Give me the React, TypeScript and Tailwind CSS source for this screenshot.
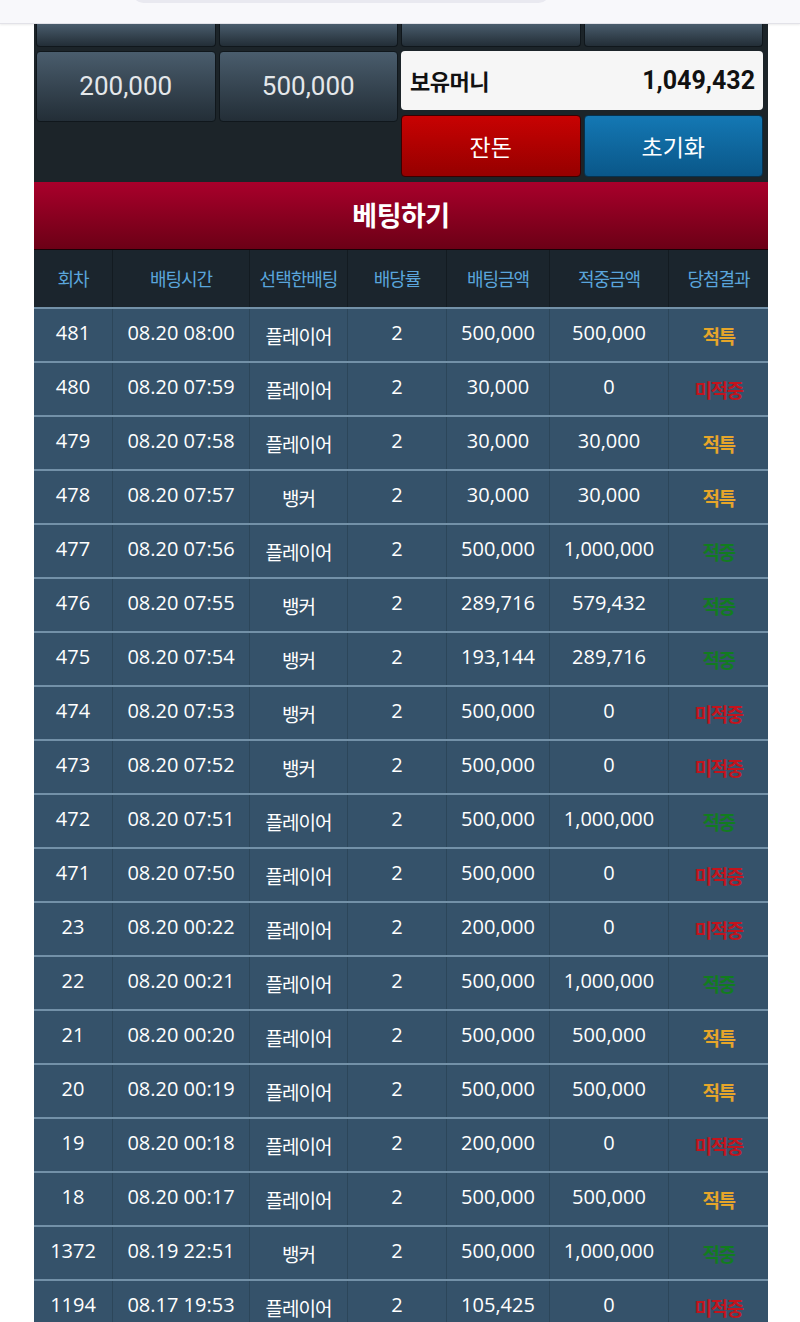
import React from 'react';

type Row = {
  no: string;
  time: string;
  pick: string;
  odds: string;
  bet: string;
  win: string;
  result: '적특' | '미적중' | '적중';
};

const rows: Row[] = [
  { no: '481', time: '08.20 08:00', pick: '플레이어', odds: '2', bet: '500,000', win: '500,000', result: '적특' },
  { no: '480', time: '08.20 07:59', pick: '플레이어', odds: '2', bet: '30,000', win: '0', result: '미적중' },
  { no: '479', time: '08.20 07:58', pick: '플레이어', odds: '2', bet: '30,000', win: '30,000', result: '적특' },
  { no: '478', time: '08.20 07:57', pick: '뱅커', odds: '2', bet: '30,000', win: '30,000', result: '적특' },
  { no: '477', time: '08.20 07:56', pick: '플레이어', odds: '2', bet: '500,000', win: '1,000,000', result: '적중' },
  { no: '476', time: '08.20 07:55', pick: '뱅커', odds: '2', bet: '289,716', win: '579,432', result: '적중' },
  { no: '475', time: '08.20 07:54', pick: '뱅커', odds: '2', bet: '193,144', win: '289,716', result: '적중' },
  { no: '474', time: '08.20 07:53', pick: '뱅커', odds: '2', bet: '500,000', win: '0', result: '미적중' },
  { no: '473', time: '08.20 07:52', pick: '뱅커', odds: '2', bet: '500,000', win: '0', result: '미적중' },
  { no: '472', time: '08.20 07:51', pick: '플레이어', odds: '2', bet: '500,000', win: '1,000,000', result: '적중' },
  { no: '471', time: '08.20 07:50', pick: '플레이어', odds: '2', bet: '500,000', win: '0', result: '미적중' },
  { no: '23', time: '08.20 00:22', pick: '플레이어', odds: '2', bet: '200,000', win: '0', result: '미적중' },
  { no: '22', time: '08.20 00:21', pick: '플레이어', odds: '2', bet: '500,000', win: '1,000,000', result: '적중' },
  { no: '21', time: '08.20 00:20', pick: '플레이어', odds: '2', bet: '500,000', win: '500,000', result: '적특' },
  { no: '20', time: '08.20 00:19', pick: '플레이어', odds: '2', bet: '500,000', win: '500,000', result: '적특' },
  { no: '19', time: '08.20 00:18', pick: '플레이어', odds: '2', bet: '200,000', win: '0', result: '미적중' },
  { no: '18', time: '08.20 00:17', pick: '플레이어', odds: '2', bet: '500,000', win: '500,000', result: '적특' },
  { no: '1372', time: '08.19 22:51', pick: '뱅커', odds: '2', bet: '500,000', win: '1,000,000', result: '적중' },
  { no: '1194', time: '08.17 19:53', pick: '플레이어', odds: '2', bet: '105,425', win: '0', result: '미적중' },
];

const headers = ['회차', '배팅시간', '선택한배팅', '배당률', '배팅금액', '적중금액', '당첨결과'];

// fixed column widths, total 734px
const cols = 'grid grid-cols-[79px_137px_98px_99px_103px_119px_99px]';

const resultColor: Record<Row['result'], string> = {
  적특: 'text-[#e6a52a]',
  미적중: 'text-[#c3141d]',
  적중: 'text-[#127c20]',
};

const kr = { fontFamily: '"Noto Sans CJK KR", sans-serif' };

const darkBtn =
  'bg-gradient-to-b from-[#4a5d6d] to-[#232e37] border border-[#10171c] text-[#e4e7ea]';

export default function App() {
  return (
    <div
      className="h-[1322px] overflow-hidden bg-white"
      style={{ fontFamily: '"Open Sans", "Noto Sans CJK KR", sans-serif' }}
    >
      {/* browser top bar */}
      <div className="h-[24px] bg-[#f8f8fb] border-b border-[#e2e2e8] shadow-[0_1px_2px_rgba(0,0,0,0.08)] overflow-hidden">
        <div className="ml-[132px] mt-[-20px] h-[23px] w-[418px] rounded-full bg-[#e9e9f0]" />
      </div>

      <div className="ml-[34px] w-[734px]">
        {/* money buttons */}
        <div className="bg-[#1c2429] pl-[2px] pr-[5px] pb-[5px]">
          <div className="grid grid-cols-4 gap-x-[3px] gap-y-[4px]">
            {[0, 1, 2, 3].map((i) => (
              <div key={i} className={`h-[23px] rounded-b-[4px] border-t-0 ${darkBtn}`} />
            ))}
            {['200,000', '500,000'].map((v) => (
              <div
                key={v}
                className={`h-[71px] rounded-[4px] flex items-center justify-center text-[26px] ${darkBtn}`}
                style={{ fontFamily: 'Roboto, "Noto Sans CJK KR", sans-serif' }}
              >
                {v}
              </div>
            ))}
            <div className="col-span-2 flex flex-col gap-[5px]">
              <div className="h-[59px] rounded-[4px] bg-[#f6f6f6] flex items-center justify-between pl-[9px] pr-[8px] text-[#111]">
                <span className="text-[22px] font-bold tracking-[-0.5px]" style={kr}>
                  보유머니
                </span>
                <span className="text-[25px] font-bold" style={{ fontFamily: 'Roboto, sans-serif' }}>
                  1,049,432
                </span>
              </div>
              <div className="grid grid-cols-2 gap-[3px]" style={kr}>
                <div className="h-[62px] rounded-[4px] border border-[#3a0000] bg-gradient-to-b from-[#c80202] to-[#960000] text-white text-[23px] flex items-center justify-center">
                  잔돈
                </div>
                <div className="h-[62px] rounded-[4px] border border-[#06324f] bg-gradient-to-b from-[#1478b4] to-[#0a5789] text-white text-[23px] flex items-center justify-center">
                  초기화
                </div>
              </div>
            </div>
          </div>
        </div>

        {/* bet banner */}
        <div
          className="h-[68px] bg-gradient-to-b from-[#a9002b] to-[#6c0016] border-b border-[#1a0006] flex items-center justify-center text-white text-[27px] font-bold tracking-[-0.5px]"
          style={kr}
        >
          베팅하기
        </div>

        {/* table header */}
        <div className={`${cols} h-[57px] bg-[#1b252d] text-[#5aa5dc] text-[18px] tracking-[-1px]`} style={kr}>
          {headers.map((h, i) => (
            <div
              key={h}
              className={`flex items-center justify-center ${i < headers.length - 1 ? 'border-r border-[#131b21]' : ''}`}
            >
              {h}
            </div>
          ))}
        </div>

        {/* table rows */}
        {rows.map((r) => (
          <div
            key={r.no + r.time}
            className={`${cols} h-[54px] bg-[#35526a] border-t-2 border-[#7391a8] text-white text-[20px]`}
          >
            <div className="flex items-center justify-center pb-[4px] border-r border-[#2c465a]">{r.no}</div>
            <div className="flex items-center justify-center pb-[4px] border-r border-[#2c465a]">{r.time}</div>
            <div
              className="flex items-center justify-center pt-[2px] border-r border-[#2c465a] text-[19px] tracking-[-1px]"
              style={kr}
            >
              {r.pick}
            </div>
            <div className="flex items-center justify-center pb-[4px] border-r border-[#2c465a]">{r.odds}</div>
            <div className="flex items-center justify-center pb-[4px] border-r border-[#2c465a]">{r.bet}</div>
            <div className="flex items-center justify-center pb-[4px] border-r border-[#2c465a]">{r.win}</div>
            <div
              className={`flex items-center justify-center pt-[2px] text-[19px] font-bold tracking-[-1.5px] ${resultColor[r.result]}`}
              style={kr}
            >
              {r.result}
            </div>
          </div>
        ))}
      </div>
    </div>
  );
}
